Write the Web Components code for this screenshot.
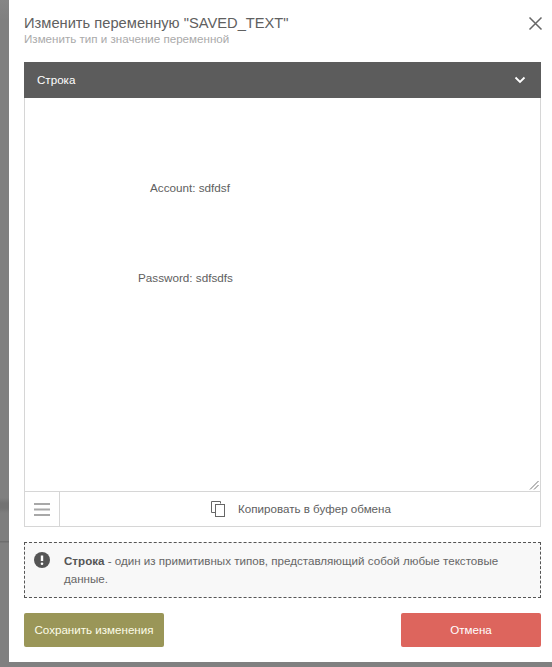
<!DOCTYPE html>
<html><head><meta charset="utf-8">
<style>
html,body{margin:0;padding:0;height:667px;overflow:hidden;font-family:"Liberation Sans",Arial,sans-serif;}
body{background:linear-gradient(#868686 0,#808080 20px,#808080 498px,#737373 503px,#737373 508px,#7e7e7e 513px,#7e7e7e 541px,#6e6e6e 541px,#6e6e6e 542px,#808080 543px,#808080 100%);}
</style></head><body>
<var-dialog>
  <span slot="title">Изменить переменную "SAVED_TEXT"</span>
  <span slot="subtitle">Изменить тип и значение переменной</span>
  <type-select>Строка</type-select>
  <text-value>
    <value-line indent="125">Account: sdfdsf</value-line>
    <value-line indent="113" gap="72">Password: sdfsdfs</value-line>
  </text-value>
  <copy-bar>Копировать в буфер обмена</copy-bar>
  <info-note><b>Строка</b> - один из примитивных типов, представляющий собой любые текстовые данные.</info-note>
  <div slot="actions" style="display:contents">
    <action-button kind="save">Сохранить изменения</action-button>
    <action-button kind="cancel">Отмена</action-button>
  </div>
</var-dialog>
<script>
function def(name,html,extra){
  customElements.define(name,class extends HTMLElement{
    constructor(){super();const r=this.attachShadow({mode:'open'});r.innerHTML=html;}
    connectedCallback(){if(extra)extra(this);}
  });
}
def('var-dialog',`<style>
:host{display:flex;flex-direction:column;box-sizing:border-box;margin-left:9px;width:543px;height:662px;background:#fff;padding:14px 11px 0 15px;position:relative}
.head{height:48px;box-sizing:border-box}
.t{font-size:14.7px;line-height:18px;color:#606060;white-space:nowrap}
.s{font-size:11.6px;line-height:14px;color:#aaa;margin-top:0;white-space:nowrap}
.x{position:absolute;left:519px;top:16px;width:15px;height:15px}
.actions{display:flex;justify-content:space-between;margin-top:15px}
</style>
<div class="head"><div class="t"><slot name="title"></slot></div><div class="s"><slot name="subtitle"></slot></div></div>
<svg class="x" viewBox="0 0 15 15"><path d="M1.5 1.5 13.5 13.5M13.5 1.5 1.5 13.5" stroke="#666" stroke-width="1.5" fill="none"/></svg>
<slot></slot>
<div class="actions"><slot name="actions"></slot></div>`);
def('type-select',`<style>
:host{display:flex;align-items:center;justify-content:space-between;box-sizing:border-box;height:36px;background:#5c5c5c;color:#fff;font-size:11.6px;padding:0 15px 1px 13px}
svg{width:12px;height:8px;margin-top:1px}
</style><span><slot></slot></span><svg viewBox="0 0 12 8"><path d="M1.5 1.5 6 6 10.5 1.5" stroke="#fff" stroke-width="1.8" fill="none"/></svg>`);
def('text-value',`<style>
:host{display:block;box-sizing:border-box;height:393px;border:1px solid #d6d6d6;border-top:0;border-bottom:0;padding-top:81px;position:relative;background:#fff}
svg{position:absolute;right:1px;bottom:1px;width:11px;height:11px}
</style><slot></slot><svg viewBox="0 0 11 11"><path d="M2 10.5 10.5 2M6 10.5 10.5 6" stroke="#777" stroke-width="1" fill="none"/></svg>`);
def('value-line',`<style>
:host{display:block;font-size:11.7px;line-height:18px;color:#606060;white-space:nowrap}
</style><slot></slot>`,el=>{
  el.style.marginLeft=el.getAttribute('indent')+'px';
  if(el.hasAttribute('gap'))el.style.marginTop=el.getAttribute('gap')+'px';
});
def('copy-bar',`<style>
:host{display:flex;box-sizing:border-box;height:36px;border:1px solid #d6d6d6;background:#fff;color:#606060;font-size:11.6px}
.m{width:34px;border-right:1px solid #d6d6d6;display:flex;align-items:center;justify-content:center}
.c{flex:1;display:flex;align-items:center;justify-content:center;gap:13px;padding:0 0 1px 2px}
.m svg{width:16px;height:13px}
.c svg{width:14px;height:16px}
</style><div class="m"><svg viewBox="0 0 16 13"><path d="M0 1h16M0 6.500h16M0 12h16" stroke="#a8a8a8" stroke-width="2" fill="none"/></svg></div>
<div class="c"><svg viewBox="0 0 14 16"><path d="M9.500 2.500V.5h-9v11h3.500" stroke="#666" fill="none"/><rect x="4.500" y="3.500" width="9" height="12" stroke="#666" fill="#fff"/></svg><span><slot></slot></span></div>`);
def('info-note',`<style>
:host{display:flex;box-sizing:border-box;height:56px;margin-top:15px;border:1px dashed #555;background:#f8f8f8;color:#666;font-size:11.6px;line-height:18px;padding:9px 24px 0 9px;gap:14px}
svg{width:16px;height:16px;flex:none}
::slotted(b){color:#555}
</style><svg viewBox="0 0 16 16"><circle cx="8" cy="8" r="8" fill="#555"/><path d="M8 3.500v5.500" stroke="#fff" stroke-width="2.400"/><circle cx="8" cy="11.700" r="1.300" fill="#fff"/></svg><div><slot></slot></div>`);
def('action-button',`<style>
:host{display:flex;align-items:center;justify-content:center;box-sizing:border-box;width:140px;height:34px;border-radius:2px;color:#fff;font-size:11.6px;padding-bottom:2px}
:host([kind=save]){background:#9a9658;color:#fdfde8}
:host([kind=cancel]){background:#dd655d;color:#fff}
</style><slot></slot>`);
</script>
</body></html>
